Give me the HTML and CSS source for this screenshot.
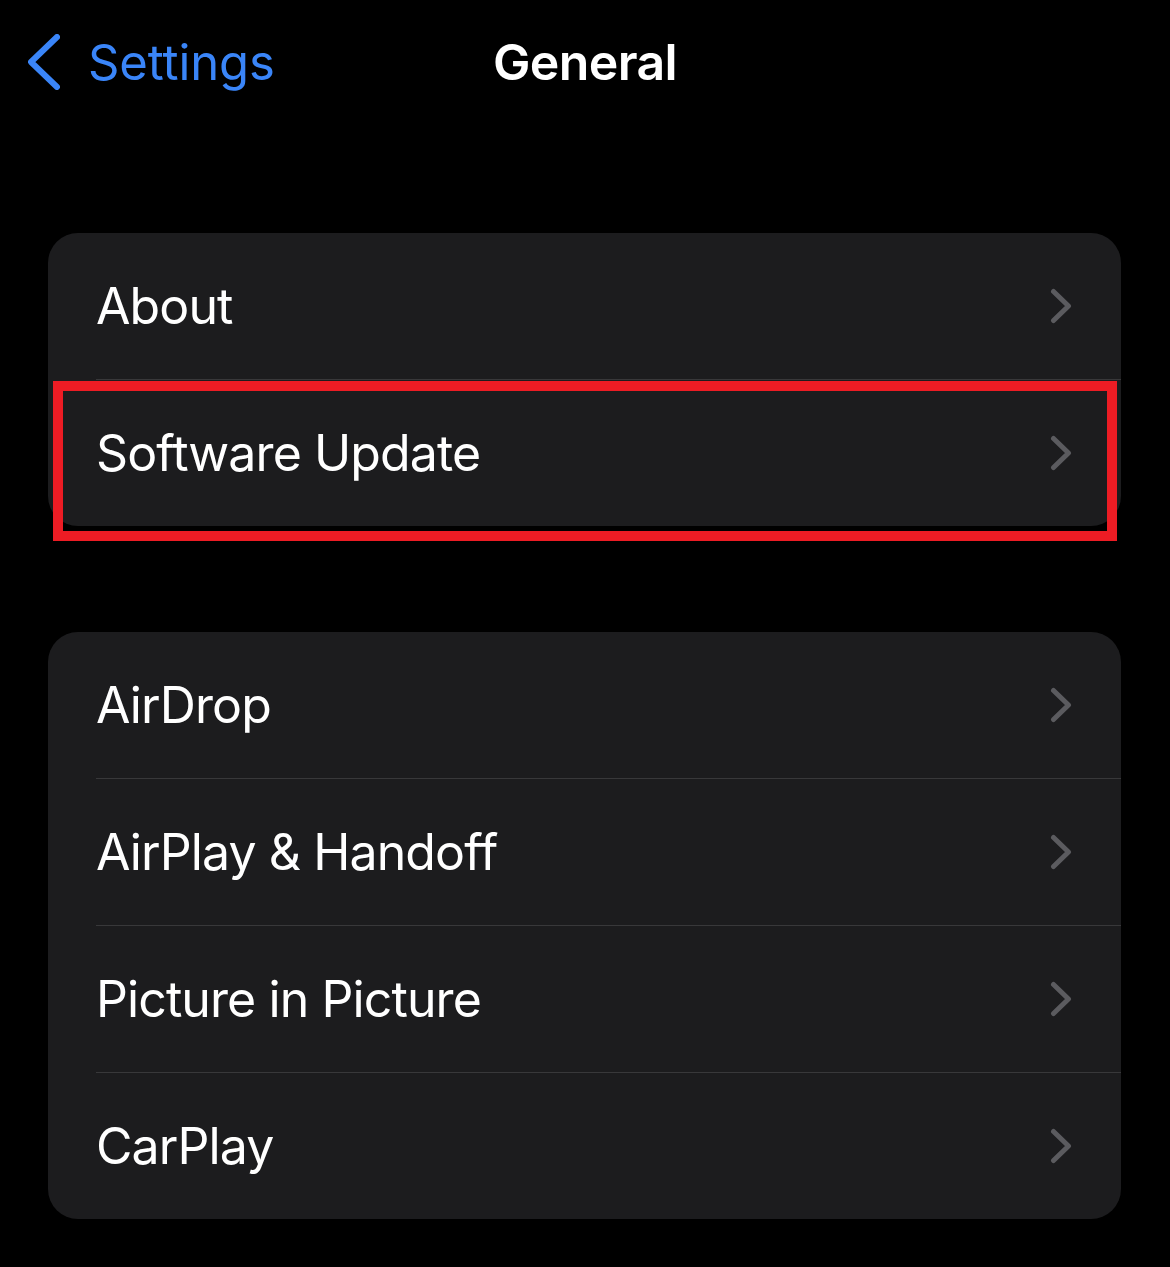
FILE: index.html
```html
<!DOCTYPE html>
<html>
<head>
<meta charset="utf-8">
<link rel="stylesheet" href="styles.css">
</head>
<body>
<header class="nav">
  <div class="nav-left">
    <svg class="back-icon" width="32" height="56" viewBox="0 0 32 56"><path d="M29 3 L3 28 L29 53" fill="none" stroke="#3a85f8" stroke-width="6" stroke-linecap="round" stroke-linejoin="round"/></svg>
    <span class="back-label">Settings</span>
  </div>
  <div class="nav-title">General</div>
  <div class="nav-right"></div>
</header>

<section class="card first-card">
  <div class="row">
    <div class="row-inner"><span class="label">About</span>
      <svg class="chev" width="22" height="36" viewBox="0 0 22 36"><path d="M3.5 3.5 L18.5 18 L3.5 32.5" fill="none" stroke="#5b5b5f" stroke-width="5" stroke-linecap="round" stroke-linejoin="round"/></svg>
    </div>
  </div>
  <div class="row highlighted">
    <div class="row-inner"><span class="label">Software Update</span>
      <svg class="chev" width="22" height="36" viewBox="0 0 22 36"><path d="M3.5 3.5 L18.5 18 L3.5 32.5" fill="none" stroke="#5b5b5f" stroke-width="5" stroke-linecap="round" stroke-linejoin="round"/></svg>
    </div>
    <div class="highlight-box"></div>
  </div>
</section>

<section class="card second-card">
  <div class="row">
    <div class="row-inner"><span class="label">AirDrop</span>
      <svg class="chev" width="22" height="36" viewBox="0 0 22 36"><path d="M3.5 3.5 L18.5 18 L3.5 32.5" fill="none" stroke="#5b5b5f" stroke-width="5" stroke-linecap="round" stroke-linejoin="round"/></svg>
    </div>
  </div>
  <div class="row">
    <div class="row-inner"><span class="label">AirPlay &amp; Handoff</span>
      <svg class="chev" width="22" height="36" viewBox="0 0 22 36"><path d="M3.5 3.5 L18.5 18 L3.5 32.5" fill="none" stroke="#5b5b5f" stroke-width="5" stroke-linecap="round" stroke-linejoin="round"/></svg>
    </div>
  </div>
  <div class="row">
    <div class="row-inner"><span class="label">Picture in Picture</span>
      <svg class="chev" width="22" height="36" viewBox="0 0 22 36"><path d="M3.5 3.5 L18.5 18 L3.5 32.5" fill="none" stroke="#5b5b5f" stroke-width="5" stroke-linecap="round" stroke-linejoin="round"/></svg>
    </div>
  </div>
  <div class="row">
    <div class="row-inner"><span class="label">CarPlay</span>
      <svg class="chev" width="22" height="36" viewBox="0 0 22 36"><path d="M3.5 3.5 L18.5 18 L3.5 32.5" fill="none" stroke="#5b5b5f" stroke-width="5" stroke-linecap="round" stroke-linejoin="round"/></svg>
    </div>
  </div>
</section>
</body>
</html>
```

FILE: styles.css
```css
html, body {
  margin: 0;
  padding: 0;
  background: #000;
}
body {
  font-family: Inter, "Liberation Sans", sans-serif;
  color: #fff;
  width: 1170px;
  height: 1267px;
  overflow: hidden;
}
.nav {
  height: 124px;
  display: grid;
  grid-template-columns: 1fr auto 1fr;
  align-items: center;
}
.nav-left {
  display: flex;
  align-items: center;
  padding-left: 28px;
  gap: 28px;
}
.back-icon {
  display: block;
}
.back-label {
  color: #3a85f8;
  font-size: 49px;
  font-weight: 400;
  line-height: 1;
  letter-spacing: -0.1px;
}
.nav-title {
  font-size: 50px;
  font-weight: 600;
  line-height: 1;
  letter-spacing: -0.6px;
}
.card {
  margin: 0 49px 0 48px;
  background: #1c1c1e;
  border-radius: 30px;
}
.first-card {
  margin-top: 109px;
}
.second-card {
  margin-top: 106px;
}
.row {
  position: relative;
  padding-left: 48px;
}
.row-inner {
  height: 146px;
  display: flex;
  align-items: center;
  justify-content: space-between;
  padding-left: 0;
  padding-right: 49px;
}
.row + .row .row-inner {
  border-top: 1px solid #38383a;
}
.label {
  font-size: 50px;
  line-height: 1;
  letter-spacing: -0.9px;
}
.chev {
  display: block;
}
.highlight-box {
  position: absolute;
  left: 5px;
  right: 4px;
  top: 2px;
  height: 140px;
  border: 10px solid #ed1c24;
}
```
